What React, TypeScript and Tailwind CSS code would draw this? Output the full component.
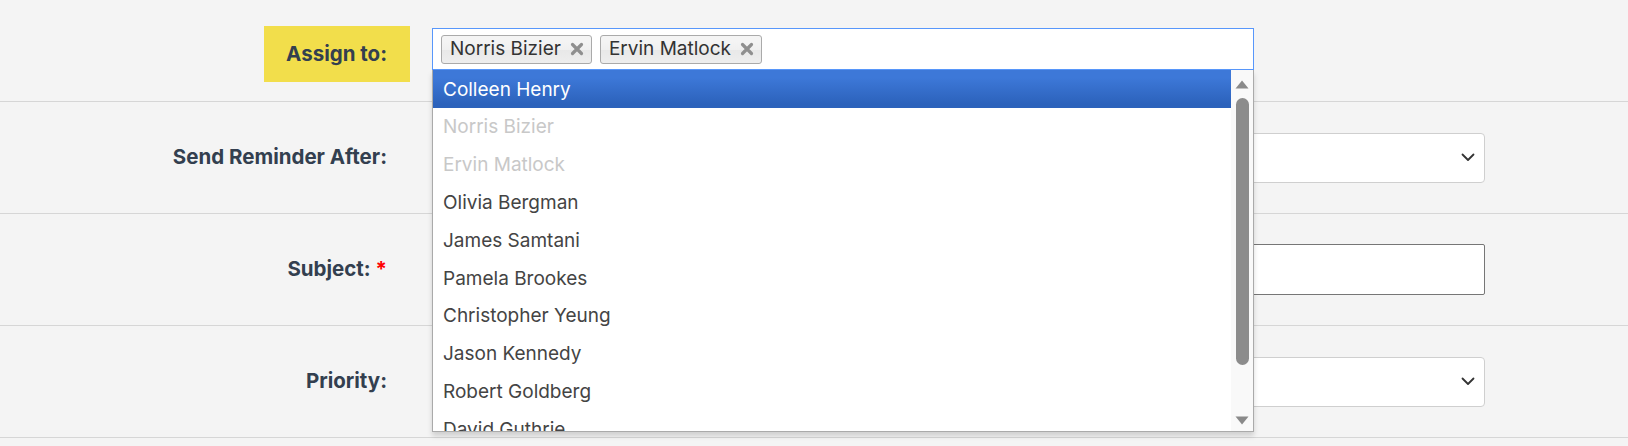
import React from 'react';

const PEOPLE = [
  { name: 'Colleen Henry', state: 'active' },
  { name: 'Norris Bizier', state: 'picked' },
  { name: 'Ervin Matlock', state: 'picked' },
  { name: 'Olivia Bergman', state: '' },
  { name: 'James Samtani', state: '' },
  { name: 'Pamela Brookes', state: '' },
  { name: 'Christopher Yeung', state: '' },
  { name: 'Jason Kennedy', state: '' },
  { name: 'Robert Goldberg', state: '' },
  { name: 'David Guthrie', state: '' },
];

function Chevron() {
  return (
    <svg width="14" height="9" viewBox="0 0 14 9" fill="none">
      <path d="M1.5 1.5L7 7l5.5-5.5" stroke="#333" strokeWidth="1.8" strokeLinecap="round" strokeLinejoin="round" />
    </svg>
  );
}

function Tag({ label }: { label: string }) {
  return (
    <span className="flex h-[29px] items-center gap-[9px] rounded-[3px] border border-[#aaa] bg-[linear-gradient(#f4f4f4_20%,#f0f0f0_50%,#e8e8e8_52%,#eeeeee_100%)] pl-[8px] pr-[7px] text-[19px] text-[#333]">
      {label}
      <svg width="14" height="14" viewBox="0 0 14 14">
        <path d="M2.5 2.5l9 9M11.5 2.5l-9 9" stroke="#8f8f8f" strokeWidth="3.2" strokeLinecap="round" />
      </svg>
    </span>
  );
}

function Label({ children }: { children: React.ReactNode }) {
  return (
    <div className="w-[410px] shrink-0 pr-[23px] text-right text-[20.5px] font-bold text-[#333f4f]">{children}</div>
  );
}

function FakeSelect() {
  return (
    <div className="ml-[22px] flex h-[50px] w-[1053px] items-center justify-end rounded-[4px] border border-[#cfcfcf] bg-white pr-[9px]">
      <Chevron />
    </div>
  );
}

export default function App() {
  return (
    <div className="min-h-screen overflow-hidden bg-[#f4f4f4] font-[Inter,sans-serif]">
      {/* Assign to row */}
      <div className="flex h-[102px] border-b border-[#d6d6d6]">
        <div className="flex w-[410px] shrink-0 justify-end pt-[26px]">
          <div className="flex h-[56px] w-[146px] items-center justify-end pr-[23px] text-[20.5px] font-bold text-[#333f4f] bg-[#f2de4b]">
            Assign to:
          </div>
        </div>
        <div className="relative z-10 ml-[22px] pt-[28px]">
          <div className="flex h-[42px] w-[822px] items-center gap-[8px] border border-[#5897fb] bg-white px-[8px]">
            <Tag label="Norris Bizier" />
            <Tag label="Ervin Matlock" />
          </div>

          {/* dropdown */}
          <div className="absolute left-0 top-[70px] flex h-[362px] w-[822px] border border-t-0 border-[#aaa] bg-white shadow-[0_4px_5px_rgba(0,0,0,0.15)]">
            <ul className="flex-1 overflow-hidden">
              {PEOPLE.map((p) => (
                <li
                  key={p.name}
                  className={
                    p.state === 'active'
                      ? 'flex h-[37.8px] items-center bg-[linear-gradient(#3d78d8_20%,#2c62bb_90%)] px-[10px] pt-[2px] text-[19px] text-white'
                      : p.state === 'picked'
                        ? 'flex h-[37.8px] items-center px-[10px] pt-[2px] text-[19px] text-[#c8c8c8]'
                        : 'flex h-[37.8px] items-center px-[10px] pt-[2px] text-[19px] text-[#444]'
                  }
                >
                  {p.name}
                </li>
              ))}
            </ul>
            <div className="flex w-[22px] flex-col items-center bg-[#f9f9f9] pb-[6px] pt-[10px]">
              <svg width="14" height="9" viewBox="0 0 14 9">
                <path d="M7 0.5L13.5 8.5H0.5Z" fill="#8a8a8a" />
              </svg>
              <div className="mt-[9px] h-[267px] w-[13px] rounded-full bg-[#8c8c8c]" />
              <div className="flex-1" />
              <svg width="14" height="9" viewBox="0 0 14 9">
                <path d="M0.5 0.5H13.5L7 8.5Z" fill="#8a8a8a" />
              </svg>
            </div>
          </div>
        </div>
      </div>

      {/* Send reminder */}
      <div className="flex h-[112px] items-center border-b border-[#d6d6d6]">
        <Label>Send Reminder After:</Label>
        <FakeSelect />
      </div>

      {/* Subject */}
      <div className="flex h-[112px] items-center border-b border-[#d6d6d6]">
        <Label>
          Subject: <span className="text-[#ff0000]">*</span>
        </Label>
        <div className="ml-[22px] h-[51px] w-[1053px] rounded-[2px] border border-[#767676] bg-white" />
      </div>

      {/* Priority */}
      <div className="flex h-[112px] items-center border-b border-[#d6d6d6]">
        <Label>Priority:</Label>
        <FakeSelect />
      </div>
    </div>
  );
}
